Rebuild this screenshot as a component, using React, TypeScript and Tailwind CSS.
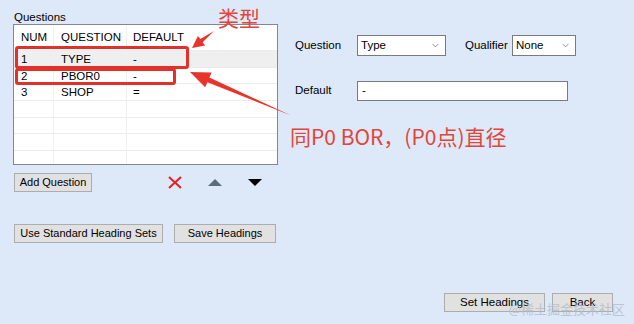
import { ChevronDown } from "lucide-react";

const rows = [
  { num: "1", q: "TYPE", d: "-", sel: true },
  { num: "2", q: "PBOR0", d: "-" },
  { num: "3", q: "SHOP", d: "=" },
  { num: "", q: "", d: "" },
  { num: "", q: "", d: "" },
  { num: "", q: "", d: "" },
  { num: "", q: "", d: "" },
];

function Btn({ label, w }: { label: string; w: string }) {
  return (
    <div
      className={`${w} h-[19px] flex items-center justify-center bg-[#e1e1e1] border border-[#adadad] leading-none`}
    >
      {label}
    </div>
  );
}

function Select({ value, w }: { value: string; w: string }) {
  return (
    <div
      className={`${w} h-[21px] flex items-center justify-between bg-white border border-[#7a7a7a] pl-[3px] pr-[4px]`}
    >
      <span>{value}</span>
      <ChevronDown className="h-[11px] w-[11px] text-[#606060]" strokeWidth={1.5} />
    </div>
  );
}

export default function App() {
  return (
    <div className="relative w-[634px] h-[324px] overflow-hidden bg-[#dde9f8] flex flex-col text-[11px] text-black font-['Liberation_Sans',Arial,sans-serif]">
      <div className="flex">
        {/* left: questions list */}
        <div className="w-[278px] pl-[13px] pt-[11px]">
          <div className="pl-[1px] leading-[13px] text-[11.5px]">Questions</div>
          <div className="w-[265px] h-[141px] bg-white border border-[#828790] overflow-hidden text-[11.5px]">
            <div className="grid grid-cols-[40px_73px_1fr] h-[25px] items-center">
              <div className="pl-[7px] h-full flex items-center border-r border-[#f0f0f0]">NUM</div>
              <div className="pl-[7px] h-full flex items-center border-r border-[#f0f0f0]">QUESTION</div>
              <div className="pl-[6px]">DEFAULT</div>
            </div>
            {rows.map((r, i) => (
              <div
                key={i}
                className={`grid grid-cols-[40px_73px_1fr] h-[16.7px] border-t border-[#ececec] ${
                  r.sel ? "bg-[#efefef]" : ""
                }`}
              >
                <div className="pl-[7px] flex items-center border-r border-[#f0f0f0]">{r.num}</div>
                <div className="pl-[7px] flex items-center border-r border-[#f0f0f0]">{r.q}</div>
                <div className="pl-[6px] flex items-center">{r.d}</div>
              </div>
            ))}
          </div>

          <div className="flex items-center mt-[8px] ml-[1px]">
            <Btn label="Add Question" w="w-[78px]" />
            <svg className="ml-[75px]" width="16" height="13" viewBox="0 0 16 13">
              <path d="M2 1 L14 12 M14 1 L2 12" stroke="#e0262a" strokeWidth="2.2" />
            </svg>
            <svg className="ml-[25px]" width="14" height="7" viewBox="0 0 14 7">
              <path d="M0 7 L7 0 L14 7 Z" fill="#5d6c7a" />
            </svg>
            <svg className="ml-[26px]" width="14" height="7" viewBox="0 0 14 7">
              <path d="M0 0 L14 0 L7 7 Z" fill="#000" />
            </svg>
          </div>

          <div className="flex mt-[32px] ml-[1px] gap-[11px]">
            <Btn label="Use Standard Heading Sets" w="w-[149px]" />
            <Btn label="Save Headings" w="w-[102px]" />
          </div>
        </div>

        {/* right: question editor */}
        <div className="pl-[17px] pt-[35px] text-[11.5px]">
          <div className="flex items-center">
            <span className="w-[62px]">Question</span>
            <Select value="Type" w="w-[89px]" />
            <span className="ml-[19px] w-[47px]">Qualifier</span>
            <Select value="None" w="w-[64px]" />
          </div>
          <div className="flex items-center mt-[25px]">
            <span className="w-[62px]">Default</span>
            <div className="w-[211px] h-[20px] bg-white border border-[#7a7a7a] pl-[4px] flex items-center">
              -
            </div>
          </div>
        </div>
      </div>

      <div className="mt-auto flex justify-end gap-[7px] pr-[21px] pb-[12px] text-[11.5px]">
        <Btn label="Set Headings" w="w-[101px]" />
        <Btn label="Back" w="w-[61px]" />
      </div>

      {/* annotations */}
      <div className="absolute left-[15px] top-[46px] w-[174px] h-[23px] border-[3px] border-[#e2302b] rounded-[3px]" />
      <div className="absolute left-[15px] top-[68px] w-[161px] h-[17px] border-[3px] border-[#e2302b] rounded-[3px]" />
      <svg className="absolute left-0 top-0 pointer-events-none" width="634" height="324">
        <polygon
          points="192,48 205.1,45.5 202.7,42.3 214,31 200.3,39.1 197.9,35.9"
          fill="#e8352c"
        />
        <polygon
          points="190,72 211.6,72.5 209.4,77.6 291,115.5 207.4,82.2 205.2,87.2"
          fill="#e8352c"
        />
      </svg>
      <div className="absolute left-[218px] top-[5px] text-[21px] leading-[24px] text-[#e2453a] font-['Noto_Sans_CJK_SC',sans-serif]">
        类型
      </div>
      <div className="absolute left-[290px] top-[122px] text-[21px] leading-[28px] text-[#e2453a] font-['Noto_Sans_CJK_SC',sans-serif]">
        同P0 BOR，(P0点)直径
      </div>
      <div className="absolute right-[9px] bottom-[7px] text-[13px] leading-[16px] text-[#b4bcc6] opacity-80 font-['Noto_Sans_CJK_SC',sans-serif]">
        @稀土掘金技术社区
      </div>
    </div>
  );
}
